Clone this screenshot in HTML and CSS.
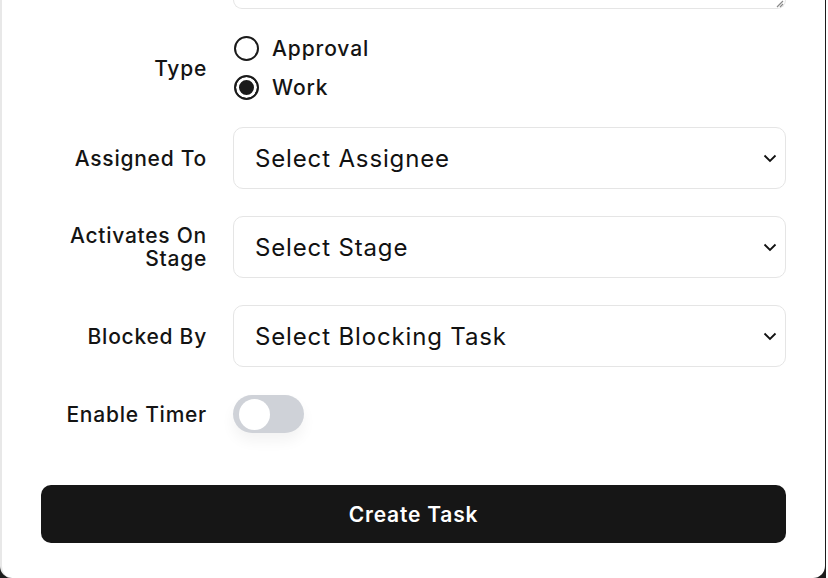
FILE: index.html
```html
<!DOCTYPE html>
<html>
<head>
<meta charset="utf-8">
<link rel="stylesheet" href="styles.css">
</head>
<body>
<div class="frame">
  <form class="panel">
    <div class="textarea-stub"><span class="grip">
      <svg width="10" height="10" viewBox="0 0 10 10"><path d="M9 3 L3 9 M9 6 L6 9" stroke="#8a8a8a" stroke-width="1.2" fill="none"/></svg>
    </span></div>
    <div class="grid">
      <div class="label">Type</div>
      <div class="radios">
        <label class="radio"><span class="dot"></span>Approval</label>
        <label class="radio"><span class="dot checked"></span>Work</label>
      </div>

      <div class="label">Assigned To</div>
      <div class="select">Select Assignee<svg class="chev" width="14" height="9" viewBox="0 0 14 9"><path d="M1.5 1.5 L7 7 L12.5 1.5" stroke="#111" stroke-width="1.8" fill="none"/></svg></div>

      <div class="label">Activates On<br>Stage</div>
      <div class="select">Select Stage<svg class="chev" width="14" height="9" viewBox="0 0 14 9"><path d="M1.5 1.5 L7 7 L12.5 1.5" stroke="#111" stroke-width="1.8" fill="none"/></svg></div>

      <div class="label">Blocked By</div>
      <div class="select">Select Blocking Task<svg class="chev" width="14" height="9" viewBox="0 0 14 9"><path d="M1.5 1.5 L7 7 L12.5 1.5" stroke="#111" stroke-width="1.8" fill="none"/></svg></div>

      <div class="label timer-label">Enable Timer</div>
      <div class="toggle-cell"><span class="toggle"><span class="knob"></span></span></div>
    </div>
    <button type="button" class="submit">Create Task</button>
  </form>
</div>
</body>
</html>
```

FILE: styles.css
```css
html, body {
  margin: 0;
  padding: 0;
  background: #ffffff;
}
body {
  font-family: Inter, "Noto Sans", "Liberation Sans", sans-serif;
  color: #141414;
}
.frame {
  width: 826px;
  height: 578px;
  background: #1c1c1c;
}
.panel {
  box-sizing: border-box;
  width: 825px;
  height: 578px;
  background: #ffffff;
  border-left: 2px solid #e8e8e8;
  border-bottom-left-radius: 12px;
  border-bottom-right-radius: 12px;
  padding: 0 39px 0 39px;
  display: flex;
  flex-direction: column;
}
.textarea-stub {
  margin-left: 192px;
  width: 553px;
  height: 9px;
  box-sizing: border-box;
  border: 1.5px solid #e5e5e5;
  border-top: none;
  border-radius: 0 0 10px 10px;
  position: relative;
}
.grip {
  position: absolute;
  right: 1px;
  bottom: 0px;
  line-height: 0;
}
.grid {
  display: grid;
  grid-template-columns: 166px 553px;
  column-gap: 26px;
  row-gap: 27px;
  margin-top: 27px;
  align-items: center;
}
.label {
  text-align: right;
  font-size: 21px;
  font-weight: 500;
  line-height: 23px;
  letter-spacing: 0.75px;
}
.timer-label {
  padding-top: 2px;
}
.radios {
  display: flex;
  flex-direction: column;
  gap: 14px;
}
.radio {
  display: flex;
  align-items: center;
  gap: 13px;
  font-size: 21px;
  font-weight: 500;
  line-height: 24px;
  letter-spacing: 0.9px;
}
.dot {
  box-sizing: border-box;
  width: 25px;
  height: 25px;
  border-radius: 50%;
  border: 2px solid #1a1a1a;
  background: #fff;
  margin-left: 1px;
}
.dot.checked {
  box-shadow: inset 0 0 0 3px #fff;
  background: #1a1a1a;
}
.select {
  box-sizing: border-box;
  height: 62px;
  border: 1.5px solid #e5e5e5;
  border-radius: 10px;
  display: flex;
  align-items: center;
  justify-content: space-between;
  padding: 0 8px 0 21px;
  font-size: 24px;
  font-weight: 400;
  letter-spacing: 0.85px;
  color: #111;
}
.toggle-cell {
  display: flex;
  align-items: center;
  padding-top: 1px;
}
.toggle {
  box-sizing: border-box;
  width: 71px;
  height: 38px;
  border-radius: 19px;
  background: #cfd2d8;
  padding: 4px 6px;
  display: flex;
  align-items: center;
  box-shadow: 0 8px 14px rgba(0,0,0,0.05);
}
.knob {
  width: 31px;
  height: 31px;
  border-radius: 50%;
  background: #ffffff;
}
.submit {
  margin-top: 52px;
  height: 58px;
  width: 745px;
  border: none;
  border-radius: 10px;
  background: #161616;
  color: #ffffff;
  font-family: Inter, "Noto Sans", "Liberation Sans", sans-serif;
  font-size: 21px;
  font-weight: 600;
  letter-spacing: 0.8px;
}
```
